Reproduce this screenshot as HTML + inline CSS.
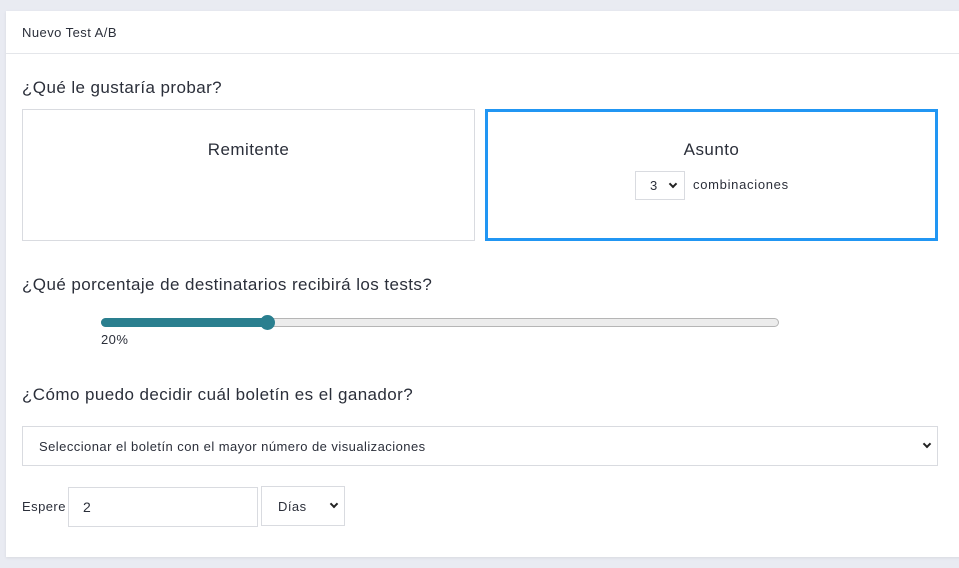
<!DOCTYPE html>
<html><head><meta charset="utf-8"><style>
*{box-sizing:border-box;margin:0;padding:0}
body{width:959px;height:568px;background:#e9ebf2;font-family:"Liberation Sans",sans-serif;color:#2b2f3a;position:relative;overflow:hidden;letter-spacing:0.45px}
.card{position:absolute;left:6px;top:11px;width:960px;height:546px;background:#fff;box-shadow:0 1px 3px rgba(0,0,0,.08)}
.a{position:absolute}
.hdr{left:0;top:0;width:960px;height:43px;border-bottom:1px solid #e4e6ea}
.h{font-size:17px;color:#2b2f3a;letter-spacing:0.42px}
.box{border:1px solid #d9dbe0}
.sel{border:1px solid #d9dbe0;font-size:13px;background:#fff}
.chev{position:absolute;width:6px;height:6px;border-right:2px solid #222;border-bottom:2px solid #222;transform:rotate(45deg)}
</style></head><body>
<div class="card">
<div class="a hdr"></div>
<div class="a" style="left:16px;top:14px;font-size:13px">Nuevo Test A/B</div>
<div class="a h" style="left:16px;top:67px">¿Qué le gustaría probar?</div>
<div class="a box" style="left:16px;top:98px;width:453px;height:132px"></div>
<div class="a" style="left:16px;top:129px;width:453px;text-align:center;font-size:17px">Remitente</div>
<div class="a" style="left:479px;top:98px;width:453px;height:132px;border:3px solid #2196f3"></div>
<div class="a" style="left:479px;top:129px;width:453px;text-align:center;font-size:17px">Asunto</div>
<div class="a sel" style="left:629px;top:160px;width:50px;height:29px"><span class="a" style="left:14px;top:6px">3</span><span class="chev" style="left:34px;top:9px"></span></div>
<div class="a" style="left:687px;top:166px;font-size:13px;letter-spacing:0.7px">combinaciones</div>
<div class="a h" style="left:16px;top:264px">¿Qué porcentaje de destinatarios recibirá los tests?</div>
<div class="a" style="left:95px;top:307px;width:678px;height:9px;border:1px solid #b5b5b5;border-radius:5px;background:#ececec"></div>
<div class="a" style="left:95px;top:307px;width:170px;height:9px;border-radius:5px;background:#2a7f8f"></div>
<div class="a" style="left:254px;top:304px;width:15px;height:15px;border-radius:50%;background:#2a7f8f"></div>
<div class="a" style="left:95px;top:321px;font-size:13px">20%</div>
<div class="a h" style="left:16px;top:374px">¿Cómo puedo decidir cuál boletín es el ganador?</div>
<div class="a sel" style="left:16px;top:415px;width:916px;height:40px"><span class="a" style="left:16px;top:12px">Seleccionar el boletín con el mayor número de visualizaciones</span><span class="chev" style="left:901px;top:14px"></span></div>
<div class="a" style="left:16px;top:488px;font-size:13px">Espere</div>
<div class="a sel" style="left:62px;top:476px;width:190px;height:40px"><span class="a" style="left:14px;top:11px;font-size:14px">2</span></div>
<div class="a sel" style="left:255px;top:475px;width:84px;height:40px"><span class="a" style="left:16px;top:12px">Días</span><span class="chev" style="left:69px;top:14px"></span></div>
</div>
</body></html>
